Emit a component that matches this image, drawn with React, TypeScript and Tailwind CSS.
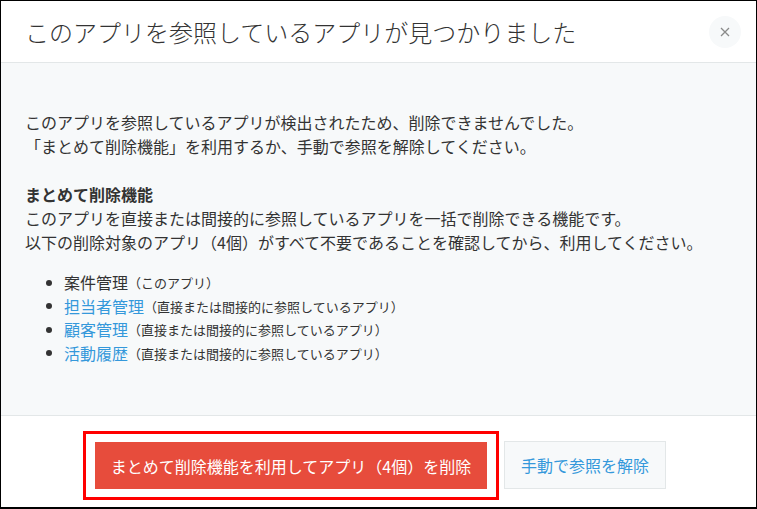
const jp = { fontFamily: '"Noto Sans CJK JP", "Noto Sans", sans-serif' }

const targets = [
  { name: '案件管理', note: '（このアプリ）', link: false },
  { name: '担当者管理', note: '（直接または間接的に参照しているアプリ）', link: true },
  { name: '顧客管理', note: '（直接または間接的に参照しているアプリ）', link: true },
  { name: '活動履歴', note: '（直接または間接的に参照しているアプリ）', link: true },
]

export default function App() {
  return (
    <div
      style={jp}
      className="flex h-[509px] w-[757px] flex-col overflow-hidden border border-b-2 border-black bg-white text-[#333333]"
    >
      {/* header */}
      <div className="flex h-[62px] shrink-0 items-center justify-between border-b border-[#e3e7e8] pl-[24px] pr-[15px]">
        <h1 className="text-[24px] font-light leading-none tracking-normal">
          このアプリを参照しているアプリが見つかりました
        </h1>
        <button className="flex h-8 w-8 items-center justify-center rounded-full bg-[#f7f9fa] text-[#8a8a8a]">
          <svg width="10" height="10" viewBox="0 0 10 10" fill="none" stroke="currentColor" strokeWidth="1.3">
            <path d="M1 1l8 8M9 1l-8 8" />
          </svg>
        </button>
      </div>

      {/* body */}
      <div className="flex-1 bg-[#f7f9fa] pb-[49px] pl-[24px] pt-[47px] text-[16px] leading-6">
        <p>
          このアプリを参照しているアプリが検出されたため、削除できませんでした。
          <br />
          「まとめて削除機能」を利用するか、手動で参照を解除してください。
        </p>
        <p className="mt-6">
          <span className="font-bold">まとめて削除機能</span>
          <br />
          このアプリを直接または間接的に参照しているアプリを一括で削除できる機能です。
          <br />
          以下の削除対象のアプリ（4個）がすべて不要であることを確認してから、利用してください。
        </p>
        <ul className="mt-[17px] pl-[21px]">
          {targets.map((t) => (
            <li key={t.name} className="flex items-center leading-[23.5px]">
              <span className="mr-[12px] h-[6px] w-[6px] shrink-0 rounded-full bg-[#333333]" />
              <span className={t.link ? 'text-[#3498db]' : ''}>{t.name}</span>
              <span className="text-[13px]">{t.note}</span>
            </li>
          ))}
        </ul>
      </div>

      {/* footer */}
      <div className="flex h-[92px] shrink-0 items-start gap-[5px] border-t border-[#e3e7e8] bg-white pl-[82px] pt-[15px]">
        <div className="border-[3px] border-[#ff0000] px-[9px] py-[8px]">
          <button className="h-[47px] w-[392px] bg-[#e74c3c] text-[16px] text-white">
            まとめて削除機能を利用してアプリ（4個）を削除
          </button>
        </div>
        <button className="mt-[10px] h-[48px] w-[162px] border border-[#e3e7e8] bg-[#f7f9fa] text-[16px] text-[#3498db]">
          手動で参照を解除
        </button>
      </div>
    </div>
  )
}
